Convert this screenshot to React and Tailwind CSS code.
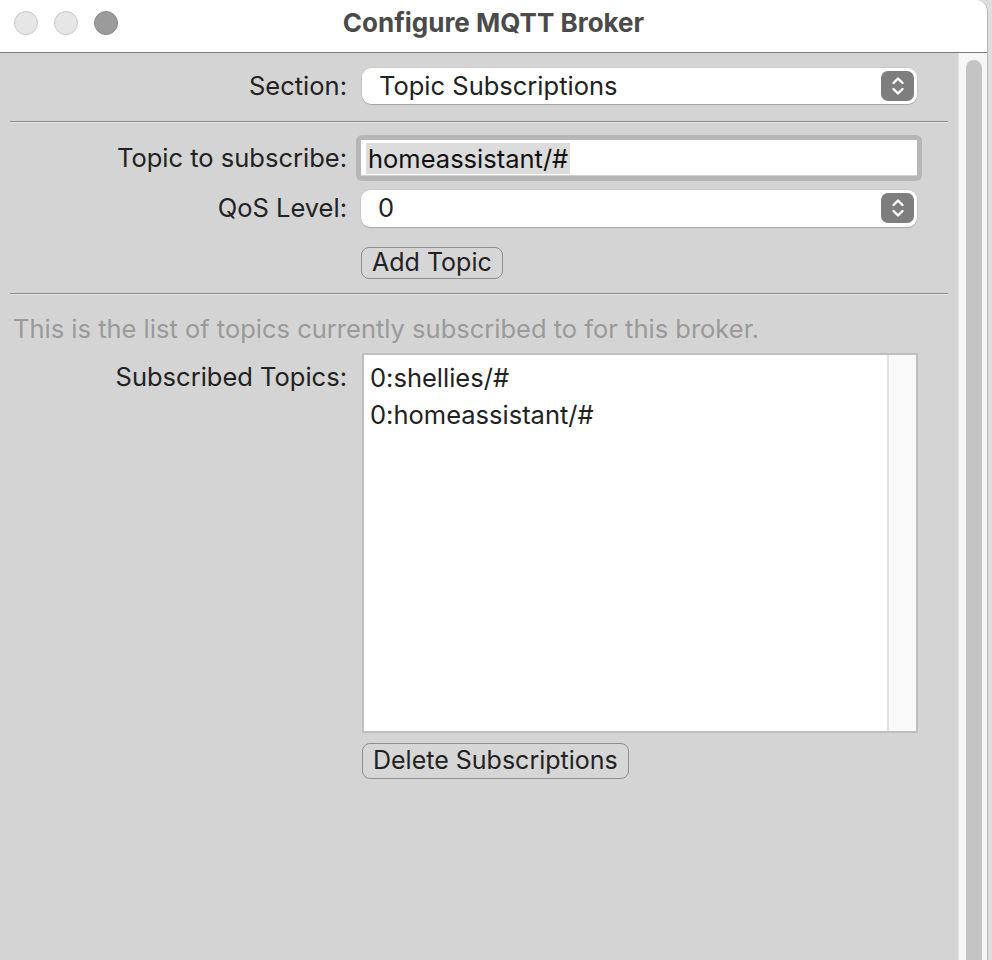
import React from 'react'

const FONT = { fontFamily: 'Inter, "Noto Sans", "Liberation Sans", sans-serif' }

function Stepper() {
  return (
    <div className="w-[33px] h-[30px] rounded-[7px] bg-[#7e7e7e] flex items-center justify-center mr-[3px]">
      <svg width="16" height="22" viewBox="0 0 16 22" fill="none" stroke="white" strokeWidth="2.4" strokeLinecap="round" strokeLinejoin="round">
        <path d="M3.5 8 L8 3.5 L12.5 8" />
        <path d="M3.5 14 L8 18.5 L12.5 14" />
      </svg>
    </div>
  )
}

function Popup({ value, className = '' }) {
  return (
    <div className={`w-[555px] bg-white rounded-[9px] shadow-[0_1px_1px_rgba(0,0,0,0.18),0_0_0_0.5px_rgba(0,0,0,0.08)] flex items-center justify-between ${className}`}>
      <span className="pl-[17px] text-[25.5px] text-[#222]">{value}</span>
      <Stepper />
    </div>
  )
}

function Label({ children, className = '' }) {
  return <div className={`w-[348px] pr-[1px] text-right text-[25.5px] text-[#222] ${className}`}>{children}</div>
}

function Separator() {
  return (
    <div className="ml-[10px] w-[938px]">
      <div className="h-px bg-[#8a8a8a]" />
      <div className="h-px bg-[#e6e6e6]" />
    </div>
  )
}

function MacButton({ children, className = '' }) {
  return (
    <button className={`h-[32px] px-[10px] rounded-[8px] border-[1.5px] border-[#8e8e8e] bg-[#d6d6d6] text-[25px] text-[#222] leading-none ${className}`}>
      {children}
    </button>
  )
}

export default function App() {
  return (
    <div className="w-[992px] h-[960px] bg-[#dedede] overflow-hidden" style={FONT}>
      <div className="w-[988px] h-full rounded-tr-[12px] overflow-hidden flex flex-col border-r border-[#b5b5b5]">
        {/* Title bar */}
        <div className="h-[53px] bg-white border-b border-[#7b7b7b] relative flex items-center justify-center shrink-0">
          <div className="absolute left-[14px] top-[11px] flex gap-[16px]">
            <span className="w-[24px] h-[24px] rounded-full bg-[#e6e6e6] border border-[#c9c9c9]" />
            <span className="w-[24px] h-[24px] rounded-full bg-[#e6e6e6] border border-[#c9c9c9]" />
            <span className="w-[24px] h-[24px] rounded-full bg-[#9b9b9b] border border-[#868686]" />
          </div>
          <h1 className="text-[26px] font-bold text-[#4a4a4a] -mt-[8px]">Configure MQTT Broker</h1>
        </div>

        {/* Body */}
        <div className="flex-1 flex bg-[#d4d4d4]">
          <div className="flex-1 flex flex-col pt-[14px]">
            {/* Section */}
            <div className="flex items-center gap-[14px]">
              <Label>Section:</Label>
              <Popup value="Topic Subscriptions" className="h-[36px]" />
            </div>

            <div className="mt-[16px]"><Separator /></div>

            {/* Topic to subscribe */}
            <div className="flex items-center gap-[8px] mt-[12px]">
              <Label>Topic to subscribe:</Label>
              <div className="w-[566px] h-[46px] rounded-[6px] bg-[#b6b6b6] p-[5px]">
                <div className="h-full bg-white flex items-center pl-[5px] shadow-[inset_0_-1px_0_#d0d0d0]">
                  <span className="bg-[#dcdcdc] px-[2px] text-[25.5px] text-[#111] leading-[31px]">homeassistant/#</span>
                </div>
              </div>
            </div>

            {/* QoS */}
            <div className="flex items-center gap-[13px] mt-[8px]">
              <Label>QoS Level:</Label>
              <Popup value="0" className="h-[37px] w-[556px]" />
            </div>

            <div className="ml-[361px] mt-[19px]">
              <MacButton>Add Topic</MacButton>
            </div>

            <div className="mt-[14px]"><Separator /></div>

            <p className="ml-[13px] mt-[18px] text-[25.5px] text-[#9a9a9a] leading-[31px]">
              This is the list of topics currently subscribed to for this broker.
            </p>

            {/* Subscribed topics */}
            <div className="flex items-start gap-[14px] mt-[9px]">
              <Label className="leading-[48px]">Subscribed Topics:</Label>
              <div className="w-[556px] h-[380px] border-2 border-[#bebebe] bg-white flex">
                <div className="flex-1 pl-[6px] pt-[4px] text-[25.5px] text-[#222]">
                  <div className="leading-[37px]">0:shellies/#</div>
                  <div className="leading-[37px]">0:homeassistant/#</div>
                </div>
                <div className="w-[29px] bg-[#f9f9f9] border-l-2 border-[#e2e2e2]" />
              </div>
            </div>

            <div className="ml-[362px] mt-[10px]">
              <MacButton className="h-[36px]">Delete Subscriptions</MacButton>
            </div>
          </div>

          {/* Scrollbar */}
          <div className="w-[29px] bg-[#f6f6f6] border-l border-[#e4e4e4] pt-[7px] pl-[7px] flex">
            <div className="w-[16px] h-full rounded-t-full bg-[#c4c4c4]" />
          </div>
        </div>
      </div>
    </div>
  )
}
